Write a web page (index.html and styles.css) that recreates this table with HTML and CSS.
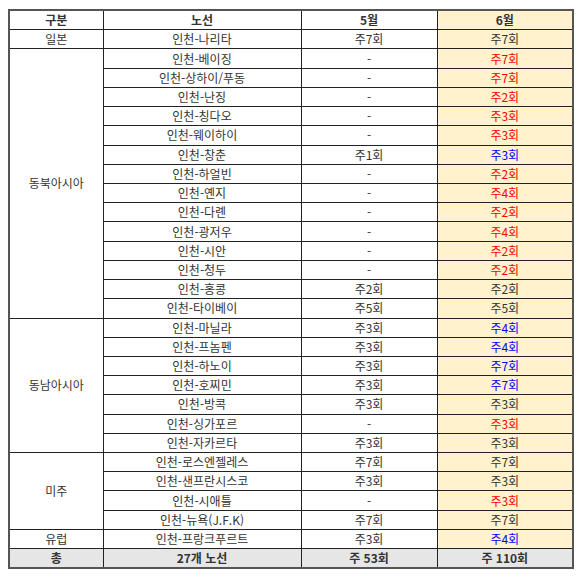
FILE: index.html
```html
<!DOCTYPE html>
<html lang="ko">
<head>
<meta charset="utf-8">
<link rel="stylesheet" href="styles.css">
</head>
<body>
<table class="sched">
<colgroup><col class="c1"><col class="c2"><col class="c3"><col class="c4"></colgroup>
<thead>
<tr><th>구분</th><th>노선</th><th>5월</th><th class="jun">6월</th></tr>
</thead>
<tbody>
<tr><td>일본</td><td>인천-나리타</td><td>주7회</td><td class="jun">주7회</td></tr>
<tr><td rowspan="14">동북아시아</td><td>인천-베이징</td><td>-</td><td class="jun red">주7회</td></tr>
<tr><td>인천-상하이/푸동</td><td>-</td><td class="jun red">주7회</td></tr>
<tr><td>인천-난징</td><td>-</td><td class="jun red">주2회</td></tr>
<tr><td>인천-칭다오</td><td>-</td><td class="jun red">주3회</td></tr>
<tr><td>인천-웨이하이</td><td>-</td><td class="jun red">주3회</td></tr>
<tr><td>인천-창춘</td><td>주1회</td><td class="jun blue">주3회</td></tr>
<tr><td>인천-하얼빈</td><td>-</td><td class="jun red">주2회</td></tr>
<tr><td>인천-옌지</td><td>-</td><td class="jun red">주4회</td></tr>
<tr><td>인천-다롄</td><td>-</td><td class="jun red">주2회</td></tr>
<tr><td>인천-광저우</td><td>-</td><td class="jun red">주4회</td></tr>
<tr><td>인천-시안</td><td>-</td><td class="jun red">주2회</td></tr>
<tr><td>인천-청두</td><td>-</td><td class="jun red">주2회</td></tr>
<tr><td>인천-홍콩</td><td>주2회</td><td class="jun">주2회</td></tr>
<tr><td>인천-타이베이</td><td>주5회</td><td class="jun">주5회</td></tr>
<tr><td rowspan="7">동남아시아</td><td>인천-마닐라</td><td>주3회</td><td class="jun blue">주4회</td></tr>
<tr><td>인천-프놈펜</td><td>주3회</td><td class="jun blue">주4회</td></tr>
<tr><td>인천-하노이</td><td>주3회</td><td class="jun blue">주7회</td></tr>
<tr><td>인천-호찌민</td><td>주3회</td><td class="jun blue">주7회</td></tr>
<tr><td>인천-방콕</td><td>주3회</td><td class="jun">주3회</td></tr>
<tr><td>인천-싱가포르</td><td>-</td><td class="jun red">주3회</td></tr>
<tr><td>인천-자카르타</td><td>주3회</td><td class="jun">주3회</td></tr>
<tr><td rowspan="4">미주</td><td>인천-로스엔젤레스</td><td>주7회</td><td class="jun">주7회</td></tr>
<tr><td>인천-샌프란시스코</td><td>주3회</td><td class="jun">주3회</td></tr>
<tr><td>인천-시애틀</td><td>-</td><td class="jun red">주3회</td></tr>
<tr><td>인천-뉴욕(J.F.K)</td><td>주7회</td><td class="jun">주7회</td></tr>
<tr><td>유럽</td><td>인천-프랑크푸르트</td><td>주3회</td><td class="jun blue">주4회</td></tr>
</tbody>
<tfoot>
<tr class="total"><td>총</td><td>27개 노선</td><td>주 53회</td><td>주 110회</td></tr>
</tfoot>
</table>
</body>
</html>
```

FILE: styles.css
```css
html, body {
  margin: 0;
  padding: 0;
  background: #ffffff;
}
body {
  padding: 9px 0 0 8px;
  font-family: "Noto Sans CJK KR", "Noto Sans", sans-serif;
  font-size: 12px;
  color: #333333;
}
.sched {
  border-collapse: collapse;
  table-layout: fixed;
  width: 564px;
  border: 2px solid #555555;
}
.c1 { width: 94px; }
.c2 { width: 198px; }
.c3 { width: 136px; }
.c4 { width: 136px; }
.sched th, .sched td {
  border: 1px solid #222222;
  height: 18.22px;
  padding: 0;
  text-align: center;
  vertical-align: middle;
  line-height: 14px;
  white-space: nowrap;
}
.sched th {
  font-weight: bold;
}
.sched .jun {
  background: #fff2cc;
}
.sched .red { color: #ff0000; }
.sched .blue { color: #0000ff; }
.sched .total td {
  background: #e6e6e6;
  font-weight: bold;
}
```
